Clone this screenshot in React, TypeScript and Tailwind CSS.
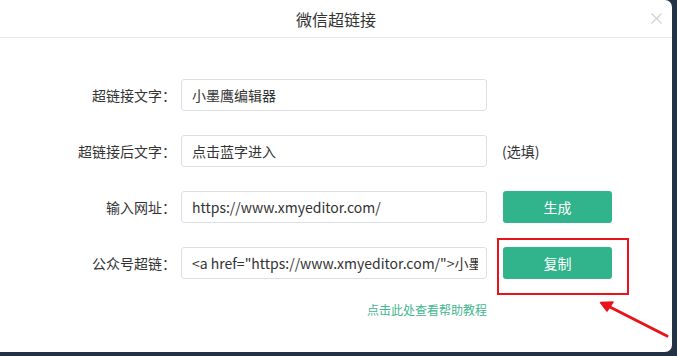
import React from "react";

const font = { fontFamily: '"Noto Sans CJK SC", "Noto Sans", sans-serif' };

function Row({
  label,
  value,
  extra,
}: {
  label: string;
  value: string;
  extra?: React.ReactNode;
}) {
  return (
    <div className="flex h-[32px] items-center">
      <div className="w-[176px] shrink-0 text-right text-[14px] text-[#333]">{label}</div>
      <input
        readOnly
        value={value}
        className="ml-[5px] h-[32px] w-[306px] shrink-0 rounded-[3px] border border-[#dcdfe6] pl-[10px] pr-[8px] text-[14px] text-[#333] outline-none"
      />
      {extra}
    </div>
  );
}

function GreenButton({ children }: { children: React.ReactNode }) {
  return (
    <button
      type="button"
      className="ml-[16px] flex h-[32px] w-[109px] items-center justify-center rounded-[3px] bg-[#31b38b] text-[14px] text-white"
    >
      {children}
    </button>
  );
}

export default function App() {
  return (
    <div className="h-[356px] w-[677px] overflow-hidden bg-[#243246]" style={font}>
      <div className="relative h-[352px] w-[672px] rounded-r-[7px] bg-white">
        <div className="relative flex h-[38px] items-center justify-center border-b border-[#e8e8e8]">
          <span className="text-[16px] text-[#333]">微信超链接</span>
          <svg
            className="absolute left-[651px] top-[13px]"
            width="11"
            height="11"
            viewBox="0 0 11 11"
            fill="none"
            stroke="#d0d0d0"
            strokeWidth="1.1"
          >
            <path d="M0.5 0.5L10.5 10.5M10.5 0.5L0.5 10.5" />
          </svg>
        </div>

        <div className="flex flex-col gap-[24px] pt-[41px]">
          <Row label="超链接文字：" value="小墨鹰编辑器" />
          <Row
            label="超链接后文字："
            value="点击蓝字进入"
            extra={<span className="ml-[15px] text-[14px] text-[#333]">(选填)</span>}
          />
          <Row
            label="输入网址："
            value="https://www.xmyeditor.com/"
            extra={<GreenButton>生成</GreenButton>}
          />
          <Row
            label="公众号超链："
            value={'<a href="https://www.xmyeditor.com/">小墨鹰编辑器</a>'}
            extra={<GreenButton>复制</GreenButton>}
          />
        </div>

        <div className="flex w-[487px] justify-end pt-[22px]">
          <span className="text-[12px] text-[#3fb68f]">点击此处查看帮助教程</span>
        </div>

        <div className="absolute left-[497px] top-[238px] h-[57px] w-[132px] border-2 border-[#e8131b]" />

        <svg
          className="absolute left-[596px] top-[296px]"
          width="76"
          height="44"
          viewBox="596 296 76 44"
          fill="none"
        >
          <path d="M667 336L606 305" stroke="#e8131b" strokeWidth="3" strokeLinecap="round" />
          <path d="M600.5 302.5L613 302L607 311Z" fill="#e8131b" stroke="#e8131b" strokeWidth="1.5" strokeLinejoin="round" />
        </svg>
      </div>
    </div>
  );
}
